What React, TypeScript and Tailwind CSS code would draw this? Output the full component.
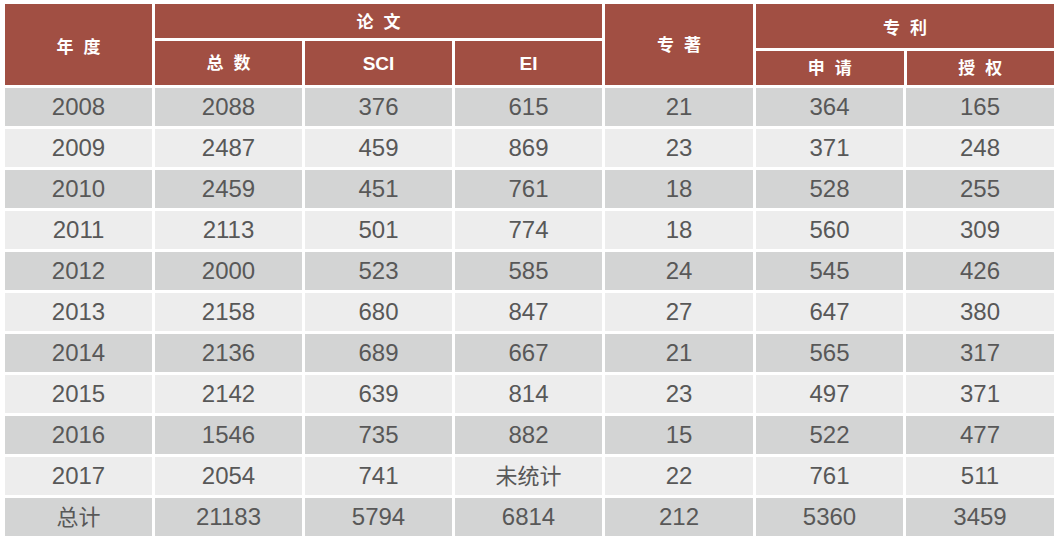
import React from "react";

const rows: string[][] = [
  ["2008", "2088", "376", "615", "21", "364", "165"],
  ["2009", "2487", "459", "869", "23", "371", "248"],
  ["2010", "2459", "451", "761", "18", "528", "255"],
  ["2011", "2113", "501", "774", "18", "560", "309"],
  ["2012", "2000", "523", "585", "24", "545", "426"],
  ["2013", "2158", "680", "847", "27", "647", "380"],
  ["2014", "2136", "689", "667", "21", "565", "317"],
  ["2015", "2142", "639", "814", "23", "497", "371"],
  ["2016", "1546", "735", "882", "15", "522", "477"],
  ["2017", "2054", "741", "未统计", "22", "761", "511"],
  ["总计", "21183", "5794", "6814", "212", "5360", "3459"],
];

const H = "bg-[#a14f43] text-white font-bold flex items-center justify-center";

function Two({ a, b }: { a: string; b: string }) {
  return (
    <span className="flex gap-[10px]">
      <span>{a}</span>
      <span>{b}</span>
    </span>
  );
}

export default function App() {
  return (
    <div
      className="w-[1058px] h-[541px] bg-white pt-[4px] pl-[5px]"
      style={{ fontFamily: '"Liberation Sans", Arial, "Noto Sans CJK SC", sans-serif' }}
    >
      <div className="w-[1049px] flex flex-col gap-[3px]">
        {/* header */}
        <div className="flex gap-[3px] h-[81px] text-[17px]">
          <div className={`${H} w-[147px] pt-[7px]`}>
            <Two a="年" b="度" />
          </div>
          <div className="w-[447px] flex flex-col gap-[3px]">
            <div className={`${H} h-[34px] pt-[3px]`}>
              <Two a="论" b="文" />
            </div>
            <div className="flex-1 flex gap-[3px]">
              <div className={`${H} flex-1 pt-[2px]`}>
                <Two a="总" b="数" />
              </div>
              <div className={`${H} flex-1 text-[19px] pt-[2px]`}>SCI</div>
              <div className={`${H} flex-1 text-[19px] pt-[2px]`}>EI</div>
            </div>
          </div>
          <div className={`${H} w-[148px] pt-[3px]`}>
            <Two a="专" b="著" />
          </div>
          <div className="flex-1 flex flex-col gap-[3px]">
            <div className={`${H} h-[44px] pt-[5px]`}>
              <Two a="专" b="利" />
            </div>
            <div className="flex-1 flex gap-[3px]">
              <div className={`${H} flex-1 pt-[2px]`}>
                <Two a="申" b="请" />
              </div>
              <div className={`${H} flex-1 pt-[2px]`}>
                <Two a="授" b="权" />
              </div>
            </div>
          </div>
        </div>
        {/* body */}
        {rows.map((r, i) => (
          <div key={i} className="flex gap-[3px] h-[38px]">
            {r.map((c, j) => (
              <div
                key={j}
                className={`${j === 4 ? "w-[148px]" : "w-[147px]"} ${
                  j === 6 ? "flex-1" : ""
                } ${i % 2 === 0 ? "bg-[#d3d4d4]" : "bg-[#ededed]"} flex items-center justify-center text-[#585858] ${
                  /^\d+$/.test(c) ? "text-[24px]" : "text-[22px]"
                }`}
              >
                {c}
              </div>
            ))}
          </div>
        ))}
      </div>
    </div>
  );
}
